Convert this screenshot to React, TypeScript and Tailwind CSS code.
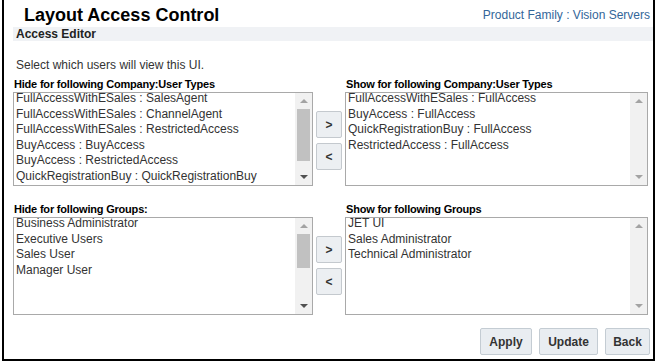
import React from 'react'

const font = { fontFamily: '"Liberation Sans", Arial, sans-serif' }

const hideTypes = [
  'FullAccessWithESales : SalesAgent',
  'FullAccessWithESales : ChannelAgent',
  'FullAccessWithESales : RestrictedAccess',
  'BuyAccess : BuyAccess',
  'BuyAccess : RestrictedAccess',
  'QuickRegistrationBuy : QuickRegistrationBuy',
]
const showTypes = [
  'FullAccessWithESales : FullAccess',
  'BuyAccess : FullAccess',
  'QuickRegistrationBuy : FullAccess',
  'RestrictedAccess : FullAccess',
]
const hideGroups = ['Business Administrator', 'Executive Users', 'Sales User', 'Manager User']
const showGroups = ['JET UI', 'Sales Administrator', 'Technical Administrator']

const Scrollbar = ({ thumb, height }: { thumb: number; height: number }) => (
  <div className="w-[17px] shrink-0 bg-[#f1f1f1] flex flex-col items-center py-[6px]" style={{ height }}>
    <div className="w-0 h-0 border-x-[4px] border-x-transparent border-b-[4px] border-b-[#a3a3a3]" />
    {thumb > 0 ? <div className="w-[13px] bg-[#c1c1c1] mt-[6px]" style={{ height: thumb }} /> : null}
    <div className="flex-1" />
    <div className={`w-0 h-0 border-x-[4px] border-x-transparent border-t-[4px] ${thumb > 0 ? 'border-t-[#505050]' : 'border-t-[#a3a3a3]'}`} />
  </div>
)

const ListBox = ({ items, thumb, width, height }: { items: string[]; thumb: number; width: number; height: number }) => (
  <div className="flex border border-[#a9a9a9] bg-white" style={{ width, height }}>
    <div className="flex-1 pl-[2px] -mt-[2px] text-[12px] leading-[15.5px] text-[#333] overflow-hidden">
      {items.map((item) => (
        <div key={item} className="whitespace-nowrap">{item}</div>
      ))}
    </div>
    <Scrollbar thumb={thumb} height={height - 2} />
  </div>
)

const MoveButtons = () => (
  <div className="flex flex-col gap-[5px] w-[26px] mt-[19px] mx-[3px]">
    <button className="h-[27px] w-[26px] rounded-[2px] border border-[#c4c9ce] bg-[#eceff2] text-[12px] font-bold text-[#333]">&gt;</button>
    <button className="h-[27px] w-[26px] rounded-[2px] border border-[#c4c9ce] bg-[#eceff2] text-[12px] font-bold text-[#333]">&lt;</button>
  </div>
)

const Shuttle = ({ hideLabel, showLabel, left, right, thumb, height }: {
  hideLabel: string; showLabel: string; left: string[]; right: string[]; thumb: number; height: number
}) => (
  <div className="flex items-start">
    <div>
      <div className="text-[11px] font-bold text-black leading-[13px] tracking-[-0.2px] pl-[1px] mb-[1px]">{hideLabel}</div>
      <ListBox items={left} thumb={thumb} width={300} height={height} />
    </div>
    <div className="pt-[14px]">
      <MoveButtons />
    </div>
    <div>
      <div className="text-[11px] font-bold text-black leading-[13px] tracking-[-0.2px] pl-[1px] mb-[1px]">{showLabel}</div>
      <ListBox items={right} thumb={0} width={303} height={height} />
    </div>
  </div>
)

export default function App() {
  return (
    <div className="w-[656px] h-[364px] bg-white" style={font}>
      <div className="ml-[2px] w-[653px] h-[361px] border-x-2 border-b-2 border-black flex flex-col">
        <div className="h-[27px] flex items-center justify-between pl-[20px] pr-[3px]">
          <div className="text-[18px] font-bold leading-[22px] text-black pt-[2px]">Layout Access Control</div>
          <div className="text-[12px] leading-[16px] text-[#336699] pt-[2px]">Product Family : Vision Servers</div>
        </div>
        <div className="ml-[9px] h-[14px] bg-[#f0f2f5] flex items-center pl-[3px]">
          <span className="text-[12px] font-bold text-[#222] leading-[14px]">Access Editor</span>
        </div>
        <div className="pl-[12px] mt-[17px] text-[12px] leading-[15px] text-[#333]">Select which users will view this UI.</div>
        <div className="pl-[9px] mt-[5px]">
          <Shuttle
            hideLabel="Hide for following Company:User Types"
            showLabel="Show for following Company:User Types"
            left={hideTypes}
            right={showTypes}
            thumb={52}
            height={94}
          />
        </div>
        <div className="pl-[9px] mt-[17px]">
          <Shuttle
            hideLabel="Hide for following Groups:"
            showLabel="Show for following Groups"
            left={hideGroups}
            right={showGroups}
            thumb={34}
            height={98}
          />
        </div>
        <div className="flex justify-end gap-[7px] pr-[3px] mt-[13px]">
          <button className="h-[27px] w-[52px] rounded-[2px] border border-[#c4ccd3] bg-[#e9edf1] text-[12px] font-bold text-[#333]">Apply</button>
          <button className="h-[27px] w-[59px] rounded-[2px] border border-[#c4ccd3] bg-[#e9edf1] text-[12px] font-bold text-[#333]">Update</button>
          <button className="h-[27px] w-[45px] rounded-[2px] border border-[#c4ccd3] bg-[#e9edf1] text-[12px] font-bold text-[#333]">Back</button>
        </div>
      </div>
    </div>
  )
}
